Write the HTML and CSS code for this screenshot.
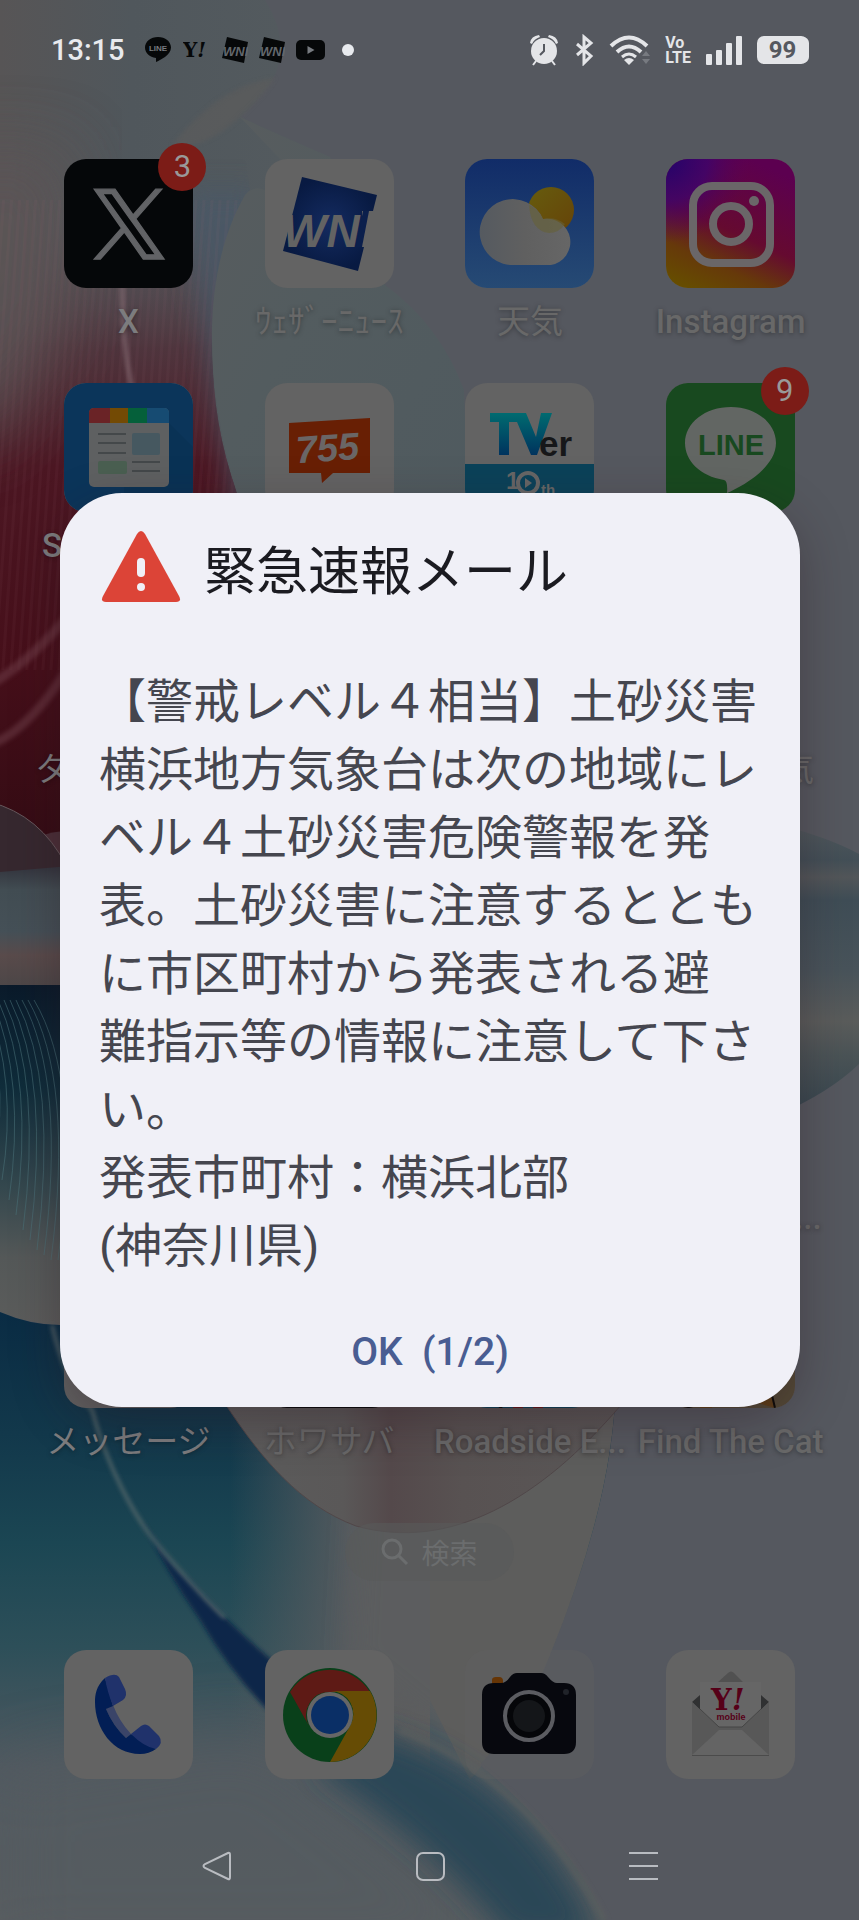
FILE: index.html
```html
<!DOCTYPE html>
<html lang="ja">
<head>
  <meta charset="UTF-8">
  <meta name="viewport" content="width=device-width, initial-scale=1.0">
  <title>緊急速報メール</title>
  <link rel="stylesheet" href="styles.css">
</head>
<body>
  <!-- Wallpaper -->
  <svg class="wallpaper" viewBox="0 0 859 1920" preserveAspectRatio="none" aria-hidden="true">
    <defs>
      <filter id="soft" x="-30%" y="-30%" width="160%" height="160%"><feGaussianBlur stdDeviation="14"/></filter>
      <filter id="soft-wide" x="-40%" y="-40%" width="180%" height="180%"><feGaussianBlur stdDeviation="34"/></filter>
      <filter id="soft-line" x="-40%" y="-40%" width="180%" height="180%"><feGaussianBlur stdDeviation="2"/></filter>
      <linearGradient id="top-left" x1="0" y1="0" x2="1" y2="0">
        <stop offset="0" stop-color="#575556"/>
        <stop offset=".4" stop-color="#50575c"/>
        <stop offset="1" stop-color="#545b5f"/>
      </linearGradient>
      <linearGradient id="red" x1="0" y1="0" x2="0" y2="1">
        <stop offset="0" stop-color="#5a5456" stop-opacity="0"/>
        <stop offset=".2" stop-color="#4e2630" stop-opacity=".7"/>
        <stop offset=".35" stop-color="#4c1723"/>
        <stop offset=".6" stop-color="#460f1a"/>
        <stop offset="1" stop-color="#26090f"/>
      </linearGradient>
      <linearGradient id="petal" x1="0" y1="0" x2="1" y2="1">
        <stop offset="0" stop-color="#585c5e"/>
        <stop offset=".4" stop-color="#535c5f"/>
        <stop offset="1" stop-color="#4f5a5f"/>
      </linearGradient>
      <linearGradient id="silver" x1="0" y1="0" x2="0" y2="1">
        <stop offset="0" stop-color="#33343d"/>
        <stop offset=".2" stop-color="#424d53"/>
        <stop offset=".55" stop-color="#455057"/>
        <stop offset=".75" stop-color="#594b4b"/>
        <stop offset="1" stop-color="#4d4748"/>
      </linearGradient>
      <linearGradient id="feather" x1="0" y1="0" x2="0" y2="1">
        <stop offset="0" stop-color="#0a1a2a"/>
        <stop offset=".3" stop-color="#0f2c3a"/>
        <stop offset=".6" stop-color="#35484e"/>
        <stop offset=".8" stop-color="#545858"/>
        <stop offset="1" stop-color="#5b5c5b"/>
      </linearGradient>
      <linearGradient id="sea" x1="0" y1="0" x2="0" y2="1">
        <stop offset="0" stop-color="#0a2c44"/>
        <stop offset=".2" stop-color="#12384b"/>
        <stop offset=".38" stop-color="#1b4653"/>
        <stop offset=".55" stop-color="#2d4f59"/>
        <stop offset=".75" stop-color="#505960"/>
        <stop offset="1" stop-color="#595d60"/>
      </linearGradient>
      <linearGradient id="sea-right" x1="0" y1="0" x2="1" y2="0">
        <stop offset="0" stop-color="#5b5c5f" stop-opacity="0"/>
        <stop offset=".6" stop-color="#5b5c5f" stop-opacity=".9"/>
        <stop offset="1" stop-color="#5d5d5d"/>
      </linearGradient>
      <linearGradient id="shell" x1="0" y1="0" x2="1" y2="0">
        <stop offset="0" stop-color="#5c5c5c"/>
        <stop offset=".3" stop-color="#5a5858"/>
        <stop offset=".42" stop-color="#54494b"/>
        <stop offset=".6" stop-color="#585252"/>
        <stop offset="1" stop-color="#5a5757"/>
      </linearGradient>
      <linearGradient id="wing" x1="0" y1="0" x2="0" y2="1">
        <stop offset="0" stop-color="#50585c"/>
        <stop offset=".12" stop-color="#434f57"/>
        <stop offset=".18" stop-color="#525659"/>
        <stop offset=".26" stop-color="#3f4d56"/>
        <stop offset=".5" stop-color="#48535a"/>
        <stop offset=".68" stop-color="#5a5c5b"/>
        <stop offset=".8" stop-color="#4a5356"/>
        <stop offset="1" stop-color="#36464f"/>
      </linearGradient>
      <pattern id="ribs" width="8" height="8" patternUnits="userSpaceOnUse" patternTransform="rotate(4)">
        <rect width="3" height="8" fill="#9d6371" opacity=".07"/>
      </pattern>
      <clipPath id="left-side"><path d="M0 0H265Q290 40 275 75Q264 95 240 117L250 190C205 270 200 390 237 493V985H0Z"/></clipPath>
    </defs>

    <rect width="859" height="1920" fill="#55585f"/>
    <path fill="url(#top-left)" d="M0 0H265Q290 40 275 75Q264 95 240 117L330 157L300 600H0Z"/>
    <path fill="#5c5b5b" opacity=".7" filter="url(#soft-line)" d="M172 145C205 105 235 84 275 78Q264 95 240 117C215 140 190 150 172 145Z"/>
    <g clip-path="url(#left-side)">
      <rect x="-10" y="190" width="260" height="790" fill="url(#red)"/>
      <path fill="#5b5556" filter="url(#soft-wide)" opacity=".9" d="M-60 150H70L60 330L-10 440H-60Z"/>
      <path fill="#4a5867" filter="url(#soft)" opacity=".8" d="M180 190H260V540H240L205 330Z"/>
      <rect y="200" width="260" height="470" fill="url(#ribs)"/>
      <path d="M122 285Q122 340 132 390" fill="none" stroke="#8b7078" stroke-width="4" opacity=".7" filter="url(#soft-line)"/>
      <path d="M-10 685Q40 655 80 600M-10 745Q30 730 70 665" fill="none" stroke="#7d4d58" stroke-width="9" opacity=".4" filter="url(#soft-line)"/>
      <path d="M30 840Q50 830 80 830V880H60Z" fill="#4b2f38"/>
    </g>

    <path fill="url(#petal)" d="M240 117Q290 140 330 157Q375 220 385 285Q440 325 464 390L470 560H280L237 493C200 370 205 265 245 195Q253 185 265 190L300 180Z"/>

    <!-- Bands left of the dialog -->
    <path fill="#36282f" stroke="#66575c" d="M-10 802Q40 815 66 865V880H-10Z"/>
    <path fill="url(#silver)" d="M0 872L70 866V985H0Z"/>
    <path fill="url(#feather)" d="M0 985H70V1325Q30 1325 0 1312Z"/>
    <g fill="none" stroke="#4a727a" stroke-width="1" opacity=".55">
      <path d="M-20 1000Q10 1070-5 1160M-14 1000Q18 1080 2 1180M-8 1000Q26 1080 9 1200M-2 1000Q34 1080 16 1215M4 1000Q42 1080 23 1230M10 1000Q50 1080 30 1240M16 1000Q58 1080 37 1250M22 1000Q66 1080 44 1255M28 1000Q74 1080 51 1260M34 1000Q82 1080 58 1260"/>
    </g>

    <!-- Lower half -->
    <path fill="url(#sea)" d="M0 1312Q30 1325 60 1325H640V1920H0Z"/>
    <rect x="230" y="1400" width="200" height="380" fill="url(#sea-right)"/>
    <path fill="#5c5d5e" filter="url(#soft)" d="M360 1480H580V1720L460 1750L350 1660Z"/>
    <path fill="#5d5d5c" d="M430 1380H616Q614 1500 550 1655Q520 1720 470 1780L430 1700Z"/>
    <path fill="#545b60" filter="url(#soft-wide)" opacity=".7" d="M0 1770L260 1730L480 1900V1960H0Z"/>
    <path fill="#0b2848" filter="url(#soft-line)" d="M143 1522Q165 1560 191 1582Q230 1625 275 1663L330 1720L300 1740Q240 1690 200 1620Q165 1570 143 1522Z"/>
    <path fill="#2a4656" filter="url(#soft)" d="M340 1725C440 1740 520 1800 575 1890L600 1940H510Q440 1850 320 1770Z"/>
    <path fill="#55585f" d="M616 1300H860V1920H606Q570 1840 480 1765Q530 1710 550 1655Q614 1500 616 1380Z"/>
    <path fill="none" stroke="#5d605f" stroke-width="8" filter="url(#soft-line)" opacity=".5" d="M400 1730Q530 1780 604 1920"/>
    <path fill="url(#shell)" stroke="#504749" d="M224 1402C262 1460 300 1505 356 1526C450 1552 540 1500 621 1405V1380H224Z"/>
    <path fill="none" stroke="#56686a" stroke-width="3" filter="url(#soft-line)" d="M52 1325C62 1370 78 1395 92 1410C108 1470 135 1515 150 1535S210 1605 225 1618"/>

    <path fill="url(#wing)" d="M780 825Q830 838 859 854V1064Q830 1092 780 1114Z"/>
  </svg>

  <!-- Shared gradients for the app icons -->
  <svg class="defs" width="0" height="0" aria-hidden="true">
    <linearGradient id="sky" x1="0" y1="0" x2="0" y2="1"><stop offset="0" stop-color="#112c68"/><stop offset="1" stop-color="#264a74"/></linearGradient>
    <linearGradient id="cloud" x1="0" y1="0" x2="1" y2="0"><stop offset="0" stop-color="#555a60"/><stop offset=".5" stop-color="#606060"/><stop offset="1" stop-color="#666"/></linearGradient>
    <linearGradient id="sun" x1="0" y1="0" x2="1" y2="1"><stop offset="0" stop-color="#665c0e"/><stop offset="1" stop-color="#664308"/></linearGradient>
    <linearGradient id="insta" x1=".2" y1="1" x2=".65" y2="0"><stop offset="0" stop-color="#664c00"/><stop offset=".22" stop-color="#66390a"/><stop offset=".48" stop-color="#650a30"/><stop offset="1" stop-color="#5c0050"/></linearGradient>
    <radialGradient id="insta-blue" cx="0" cy="0" r=".65"><stop offset="0" stop-color="#22036a"/><stop offset=".5" stop-color="#3d046d" stop-opacity=".8"/><stop offset="1" stop-color="#55005c" stop-opacity="0"/></radialGradient>
    <linearGradient id="tver" x1="0" y1="0" x2="0" y2="1"><stop offset="0" stop-color="#006b70"/><stop offset="1" stop-color="#00335e"/></linearGradient>
    <radialGradient id="wni-blue"><stop offset="0" stop-color="#142b60"/><stop offset="1" stop-color="#081a42"/></radialGradient>
  </svg>

  <header class="status-bar">
    <div class="status-left">
      <time class="clock">13:15</time>
      <svg width="28" height="28" viewBox="0 0 28 28" aria-label="LINE">
        <path fill="#060809" d="M14 1C6.800 1 1 5.600 1 11.600c0 5.400 4.600 9.600 11 10.400v4c4-1.600 15-7 15-14.400C27 5.600 21.200 1 14 1z"/>
        <text x="14" y="15" class="svg-sans" font-size="8" text-anchor="middle" fill="#777b80">LINE</text>
      </svg>
      <svg width="28" height="28" viewBox="0 0 28 28" aria-label="Yahoo">
        <text x="0" y="21" class="svg-slab" font-size="20" fill="#060809">Y<tspan font-style="italic">!</tspan></text>
      </svg>
      <svg width="26" height="28" viewBox="0 0 26 28" aria-label="ウェザーニュース">
        <path d="M5 1l21 5-4 21-22-5z" fill="#060809"/>
        <text x="1" y="20" class="svg-sans-italic" font-size="13" fill="#62676c">WNI</text>
      </svg>
      <svg width="26" height="28" viewBox="0 0 26 28" aria-label="ウェザーニュース">
        <path d="M5 1l21 5-4 21-22-5z" fill="#060809"/>
        <text x="1" y="20" class="svg-sans-italic" font-size="13" fill="#62676c">WNI</text>
      </svg>
      <svg width="29" height="20" viewBox="0 0 29 20" aria-label="YouTube"><rect width="29" height="20" rx="5" fill="#060809"/><path d="M11.500 6v8l7-4z" fill="#777b80"/></svg>
      <span class="more-dot"></span>
    </div>
    <div class="status-right">
      <svg width="30" height="32" viewBox="0 0 30 32">
        <g fill="#e4e5e8"><circle cx="15" cy="17" r="13"/><path d="M1 9Q2 2 10 1L11 3Q5 5 3 10ZM29 9Q28 2 20 1L19 3Q25 5 27 10Z"/></g>
        <path d="M7 27l-3 4M23 27l3 4" stroke="#e4e5e8" stroke-width="2"/>
        <path d="M15 10v7l-4 4" stroke="#55585f" stroke-width="2" fill="none"/>
      </svg>
      <svg width="22" height="32" viewBox="0 0 22 32"><path d="M4 10l14 12-7 7V3l7 6L4 21" fill="none" stroke="#e4e5e8" stroke-width="3"/></svg>
      <svg width="42" height="32" viewBox="0 0 42 32">
        <g fill="none" stroke="#e4e5e8" stroke-width="4"><path d="M2 12Q20-5 38 12M8 18Q20 7 32 18"/><path d="M13 23Q20 17 27 23" stroke-width="3"/></g>
        <path d="M15 26q5-4 10 0l-5 5z" fill="#e4e5e8"/>
        <path d="M33 22l4-5 4 5zM33 25l4 5 4-5z" fill="#777a80"/>
      </svg>
      <span class="volte"><span>Vo</span><span>LTE</span></span>
      <svg width="38" height="32" viewBox="0 0 38 32" fill="#e4e5e8"><rect x="1" y="20" width="6" height="11" rx="1"/><rect x="11" y="16" width="6" height="15" rx="1"/><rect x="21" y="9" width="6" height="22" rx="1"/><rect x="31" y="2" width="6" height="29" rx="1"/></svg>
      <span class="battery">99</span>
    </div>
  </header>

  <main class="home">
    <ul class="apps">
      <li class="app">
        <span class="tile black">
          <svg viewBox="0 0 129 129"><path transform="translate(27 27) scale(3.18)" fill="#626366" stroke="#626366" stroke-width=".4" d="M14.095 10.316L22.286 1h-1.940l-7.115 8.088L7.551 1H1l8.589 12.231L1 23h1.941l7.509-8.543L16.449 23H23L14.095 10.316zM11.437 13.338l-.872-1.218L3.640 2.432h2.981l5.590 7.821.868 1.219 7.265 10.166h-2.981L11.437 13.338z"/></svg>
        </span>
        <span class="badge">3</span>
        <span class="label bright">X</span>
      </li>
      <li class="app">
        <span class="tile">
          <svg viewBox="0 0 129 129"><path fill="url(#wni-blue)" d="M37 18l75 18-19 76-75-20z"/><text x="18" y="88" class="svg-sans-italic" font-size="46" fill="#636363">WNI</text><path d="M97 52H129V88H97Z" fill="#636363"/><path d="M98 52H104L97 88H91Z" fill="#0b1f4c"/></svg>
        </span>
        <span class="label kana">ｳｪｻﾞｰﾆｭｰｽ</span>
      </li>
      <li class="app">
        <span class="tile">
          <svg viewBox="0 0 129 129"><rect width="129" height="129" fill="url(#sky)"/><circle cx="86" cy="51" r="23" fill="url(#sun)"/><path fill="url(#cloud)" d="M50 106A33 33 0 1 1 78 60A23 23 0 1 1 86 106Z"/><path d="M64 46Q73 50 78 60Q90 57 100 65Q94 74 84 74Q66 72 64 46Z" fill="#666037" opacity=".6"/></svg>
        </span>
        <span class="label kana">天気</span>
      </li>
      <li class="app">
        <span class="tile">
          <svg viewBox="0 0 129 129"><rect width="129" height="129" fill="url(#insta)"/><rect width="129" height="129" fill="url(#insta-blue)"/><g fill="none" stroke="#6a6668" stroke-width="8"><rect x="27" y="27" width="77" height="77" rx="19"/><circle cx="65" cy="65" r="18"/></g><circle cx="88" cy="42" r="5" fill="#6a6668"/></svg>
        </span>
        <span class="label">Instagram</span>
      </li>

      <li class="app">
        <span class="tile">
          <svg viewBox="0 0 129 129"><rect width="129" height="129" fill="#0b355a"/><path d="M60 104L105 40L129 64V129H60Z" fill="#082c4c" opacity=".3"/><rect x="25" y="25" width="80" height="79" rx="5" fill="#5e6061"/><path d="M25 40V30Q25 25 30 25H46V40Z" fill="#6a2326"/><path d="M46 25H64V40H46Z" fill="#734a04"/><path d="M64 25H83V40H64Z" fill="#05603a"/><path d="M83 25H100Q105 25 105 30V40H83Z" fill="#164b72"/><path d="M34 51H62M34 60H62M34 70H62M68 79H96M68 88H96" stroke="#44484a" stroke-width="2"/><rect x="68" y="50" width="28" height="22" rx="2" fill="#465860"/><rect x="34" y="78" width="29" height="13" rx="2" fill="#4a5f51"/></svg>
        </span>
        <span class="label bright">SmartNews</span>
      </li>
      <li class="app">
        <span class="tile">
          <svg viewBox="0 0 129 129"><path d="M24 40L105 35V90H68L57 100L56 90H24Z" fill="#681f04"/><text transform="rotate(-4 64 70)" x="31" y="78" class="svg-sans-italic" font-size="38" fill="#6a6666">755</text></svg>
        </span>
      </li>
      <li class="app">
        <span class="tile">
          <svg viewBox="0 0 129 129"><rect y="81" width="129" height="48" fill="#0b4259"/><g fill="url(#tver)"><path d="M25 30H61L71 54L76 30H87L72 72H66L52 39H44V72H34V39H25Z"/></g><text x="74" y="73" class="svg-sans" font-size="35" fill="#161719">er</text><text x="41" y="106" class="svg-sans" font-size="24" fill="#666">1</text><text x="76" y="112" class="svg-sans" font-size="15" fill="#666">th</text><circle cx="63" cy="100" r="10" fill="none" stroke="#666" stroke-width="4"/><path d="M60 95v10l7-5z" fill="#666"/></svg>
        </span>
      </li>
      <li class="app">
        <span class="tile">
          <svg viewBox="0 0 129 129"><rect width="129" height="129" fill="#18491f"/><path fill="#626663" d="M65 24C39 24 19 40 19 60C19 78 34 93 58 97Q62 98 61 110C75 104 110 85 110 60C110 40 90 24 65 24Z"/><text x="32" y="72" class="svg-sans" font-size="29" fill="#18491f">LINE</text></svg>
        </span>
        <span class="badge">9</span>
      </li>

      <li class="app"><span class="tile"></span><span class="label kana bright">タイムツリ…</span></li>
      <li class="app"><span class="tile"></span></li>
      <li class="app"><span class="tile"></span></li>
      <li class="app"><span class="tile"></span><span class="label kana">Yahoo!天気</span></li>

      <li class="app"><span class="tile"></span></li>
      <li class="app"><span class="tile"></span></li>
      <li class="app"><span class="tile"></span></li>
      <li class="app"><span class="tile"></span></li>

      <li class="app"><span class="tile"></span></li>
      <li class="app"><span class="tile"></span></li>
      <li class="app"><span class="tile"></span></li>
      <li class="app"><span class="tile"></span><span class="label">Hidden Ob...</span></li>

      <li class="app"><span class="tile"></span><span class="label kana bright">メッセージ</span></li>
      <li class="app"><span class="tile black"></span><span class="label kana">ホワサバ</span></li>
      <li class="app">
        <span class="tile">
          <svg viewBox="0 0 129 129"><rect width="129" height="129" fill="#0b4259"/><path d="M48 120h10v9H48zM68 120h10v9H68z" fill="#651318"/><path d="M32 125l5 4" stroke="#050808" stroke-width="3"/></svg>
        </span>
        <span class="label">Roadside E...</span>
      </li>
      <li class="app">
        <span class="tile">
          <svg viewBox="0 0 129 129"><rect width="129" height="129" fill="#544a37"/><path d="M34 120h12v9H34zM92 124l14-10 3 15z" fill="#5f3f18"/><path d="M15 126q8 4 14 0M105 112l4 17" stroke="#0a0a08" stroke-width="2" fill="none"/></svg>
        </span>
        <span class="label">Find The Cat</span>
      </li>
    </ul>

    <button class="search" type="button">
      <svg width="28" height="28" viewBox="0 0 28 28" fill="none" stroke="#6b6d6e" stroke-width="3"><circle cx="11" cy="11" r="9"/><path d="M17 17l9 9"/></svg>
      検索
    </button>

    <div class="dock">
      <a class="app" href="#" aria-label="電話"><span class="tile">
        <svg viewBox="0 0 129 129"><path d="M42 59L49 55Q55 71 67 84L62 88Q49 76 42 59Z" fill="#3a4468"/><path d="M41 28C32 36 31 45 31 52C31 79 49 104 76 104Q85 104 92 99L67 84L62 88Q49 76 42 59L49 56Z" fill="#021e55"/><path d="M41 28Q51 22 55 27L61 39Q64 46 59 50L49 56Q43 41 41 28ZM67 84L77 76Q81 73 85 76L95 86Q100 93 92 99Q80 97 67 84Z" fill="#20326b"/></svg>
      </span></a>
      <a class="app" href="#" aria-label="Chrome"><span class="tile">
        <svg viewBox="0 0 129 129"><circle cx="65" cy="65" r="47" fill="#09401a"/><path d="M25 42A47 47 0 0 1 105 42L65 42A23 23 0 0 0 44 76Z" fill="#5e1a15"/><path d="M105 41A47 47 0 0 1 65 112L85 76A23 23 0 0 0 65 41Z" fill="#664c05"/><circle cx="65" cy="65" r="23" fill="#666"/><circle cx="65" cy="65" r="19" fill="#0a2f66"/></svg>
      </span></a>
      <a class="app" href="#" aria-label="カメラ"><span class="tile clear">
        <svg viewBox="0 0 129 129"><path d="M27 35V30Q27 27 31 27H34Q38 27 38 31V35Z" fill="#663505"/><path d="M29 33H36Q41 33 45 27Q48 23 52 23H76Q80 23 83 27Q88 33 92 33H99Q111 33 111 45V92Q111 104 99 104H29Q17 104 17 92V45Q17 33 29 33Z" fill="#07080e"/><circle cx="64" cy="66" r="24" fill="#050609" stroke="#5b5c61" stroke-width="4"/><circle cx="64" cy="66" r="16" fill="#141619"/><circle cx="101" cy="42" r="3" fill="#202329"/></svg>
      </span></a>
      <a class="app" href="#" aria-label="Y!mobile メール"><span class="tile">
        <svg viewBox="0 0 129 129"><path d="M52 32L62 23Q65 20 68 23L77 32Z" fill="#515151"/><path d="M26 52L34 45V60ZM103 52L95 45V60Z" fill="#303132"/><path d="M26 52L53 77H76L103 52V105H26Z" fill="#585858"/><path d="M26 105L53 80H76L103 105Z" fill="#646464"/><path d="M26 105.500H103" stroke="#4b4b4b"/><path d="M34 32H95V59L76 77H53L34 59Z" fill="#666"/><path d="M34 59L53 77H76L95 59" fill="none" stroke="#454545"/><text x="45" y="60" class="svg-slab" font-size="29" fill="#560018">Y<tspan font-style="italic">!</tspan></text><text x="65" y="70" class="svg-sans" font-size="9" text-anchor="middle" fill="#560018">mobile</text></svg>
      </span></a>
    </div>
  </main>

  <nav class="nav-bar">
    <button type="button" aria-label="戻る"><svg width="32" height="32" viewBox="0 0 32 32"><path d="M27 3Q29 2 29 5V27Q29 30 27 29L4 18Q1 16 4 14Z"/></svg></button>
    <button type="button" aria-label="ホーム"><svg width="32" height="32" viewBox="0 0 32 32"><rect x="3" y="3" width="27" height="27" rx="6"/></svg></button>
    <button type="button" aria-label="履歴"><svg width="32" height="32" viewBox="0 0 32 32"><path d="M2 3H31M2 16H31M2 29H31"/></svg></button>
  </nav>

  <!-- Alert dialog -->
  <div class="overlay">
    <section class="dialog" role="alertdialog" aria-labelledby="alert-title" aria-describedby="alert-text">
      <div class="dialog-header">
        <svg width="80" height="72" viewBox="0 0 80 72">
          <path d="M36 3Q40-3 44 3L78 65Q81 71 75 71H5Q-1 71 2 65Z" fill="#dc4437"/>
          <path d="M40 31V42" stroke="#f0f0f7" stroke-width="8" stroke-linecap="round"/>
          <circle cx="40" cy="56" r="4" fill="#f0f0f7"/>
        </svg>
        <h1 id="alert-title">緊急速報メール</h1>
      </div>
      <p id="alert-text" class="dialog-text">【警戒レベル４相当】土砂災害<br>横浜地方気象台は次の地域にレベル４土砂災害危険警報を発表。土砂災害に注意するとともに市区町村から発表される避<br>難指示等の情報に注意して下さい。<br>発表市町村：横浜北部<br>(神奈川県)</p>
      <button class="ok-button" type="button">OK&nbsp; (1/2)</button>
    </section>
  </div>
</body>
</html>
```
FILE: styles.css
```css
* {
  box-sizing: border-box;
}
body {
  position: relative;
  display: flex;
  flex-direction: column;
  min-height: 100vh;
  margin: 0;
  font-family: Roboto, "Noto Sans CJK JP", sans-serif;
  background-color: #55585f;
}
button {
  border: none;
  background: none;
  font-family: inherit;
  cursor: pointer;
}
.wallpaper {
  position: absolute;
  inset: 0;
  z-index: -1;
  width: 100%;
  height: 100%;
}
.defs {
  position: absolute;
}

/* text drawn inside icons */
.svg-sans {
  font-family: "Liberation Sans", sans-serif;
  font-weight: bold;
}
.svg-sans-italic {
  font-family: "Liberation Sans", sans-serif;
  font-weight: bold;
  font-style: italic;
}
.svg-slab {
  font-family: "DejaVu Serif", serif;
  font-weight: bold;
}

/* status bar */
.status-bar {
  display: flex;
  justify-content: space-between;
  align-items: center;
  height: 100px;
  padding: 0 51px;
}
.status-left,
.status-right {
  display: flex;
  align-items: center;
}
.status-left {
  gap: 11px;
}
.status-right {
  gap: 14px;
}
.clock {
  margin-right: 8px;
  font-size: 29px;
  font-weight: 500;
  color: #e8eaee;
}
.more-dot {
  width: 12px;
  height: 12px;
  margin-left: 6px;
  border-radius: 50%;
  background-color: #e8eaee;
}
.volte {
  display: flex;
  flex-direction: column;
  color: #e4e5e8;
  font-size: 16px;
  font-weight: 700;
  line-height: 15px;
}
.battery {
  width: 51px;
  border-radius: 7px;
  background-color: #e4e5e8;
  box-shadow: 2px 0 0 -1px #e4e5e8;
  color: #55585f;
  font-size: 24px;
  font-weight: 700;
  line-height: 28px;
  text-align: center;
}

/* home screen */
.apps {
  display: grid;
  grid-template-columns: repeat(4, 1fr);
  grid-auto-rows: 224px;
  margin: 59px 0 0;
  padding: 0 28px;
  list-style: none;
}
.app {
  position: relative;
  display: flex;
  flex-direction: column;
  align-items: center;
  gap: 14px;
}
.tile {
  width: 129px;
  height: 129px;
  border-radius: 22px;
  overflow: hidden;
  background-color: #636363;
}
.tile svg {
  display: block;
}
.tile.black {
  background-color: #050709;
}
.tile.clear {
  background-color: rgba(98, 98, 96, 0.35);
}
.badge {
  position: absolute;
  top: -16px;
  left: calc(50% + 30px);
  width: 48px;
  border-radius: 50%;
  background-color: #7c1c17;
  color: #999;
  font-size: 31px;
  line-height: 48px;
  text-align: center;
}
.label {
  color: #686868;
  font-size: 33px;
  font-weight: 500;
  line-height: 40px;
  white-space: nowrap;
  text-shadow: 0 1px 5px rgba(0, 0, 0, 0.35);
}
.label.kana {
  font-weight: 400;
}
.label.bright {
  color: #7c7c7e;
}
.search {
  display: flex;
  align-items: center;
  gap: 12px;
  height: 58px;
  margin: 20px auto 0;
  padding: 0 36px;
  border-radius: 29px;
  background-color: rgba(88, 90, 90, 0.6);
  color: #6b6d6e;
  font-size: 28px;
}
.dock {
  display: grid;
  grid-template-columns: repeat(4, 1fr);
  margin-top: 69px;
  padding: 0 28px;
}

/* navigation bar */
.nav-bar {
  display: grid;
  grid-template-columns: repeat(3, 1fr);
  margin-top: 52px;
  padding: 0 110px;
}
.nav-bar button {
  height: 72px;
}
.nav-bar svg {
  fill: none;
  stroke: #b9bcc1;
  stroke-width: 2;
}

/* dialog */
.overlay {
  position: absolute;
  inset: 0;
  display: flex;
  align-items: center;
  justify-content: center;
  padding: 0 59px 20px 60px;
}
.dialog {
  display: flex;
  flex-direction: column;
  width: 100%;
  padding: 38px 39px 24px;
  border-radius: 62px;
  background-color: #f0f0f7;
  box-shadow: 0 16px 48px rgba(40, 20, 30, 0.35);
}
.dialog-header {
  display: flex;
  align-items: flex-start;
  gap: 23px;
  padding-left: 2px;
}
.dialog-header h1 {
  margin: 0;
  color: #1b1b21;
  font-size: 52px;
  font-weight: 400;
  line-height: 84px;
}
.dialog-text {
  margin: 53px 0 41px;
  color: #45464f;
  font-size: 47px;
  line-height: 68px;
  text-spacing-trim: space-all;
}
.ok-button {
  height: 62px;
  color: #495d92;
  font-size: 39px;
  font-weight: 500;
}
```
